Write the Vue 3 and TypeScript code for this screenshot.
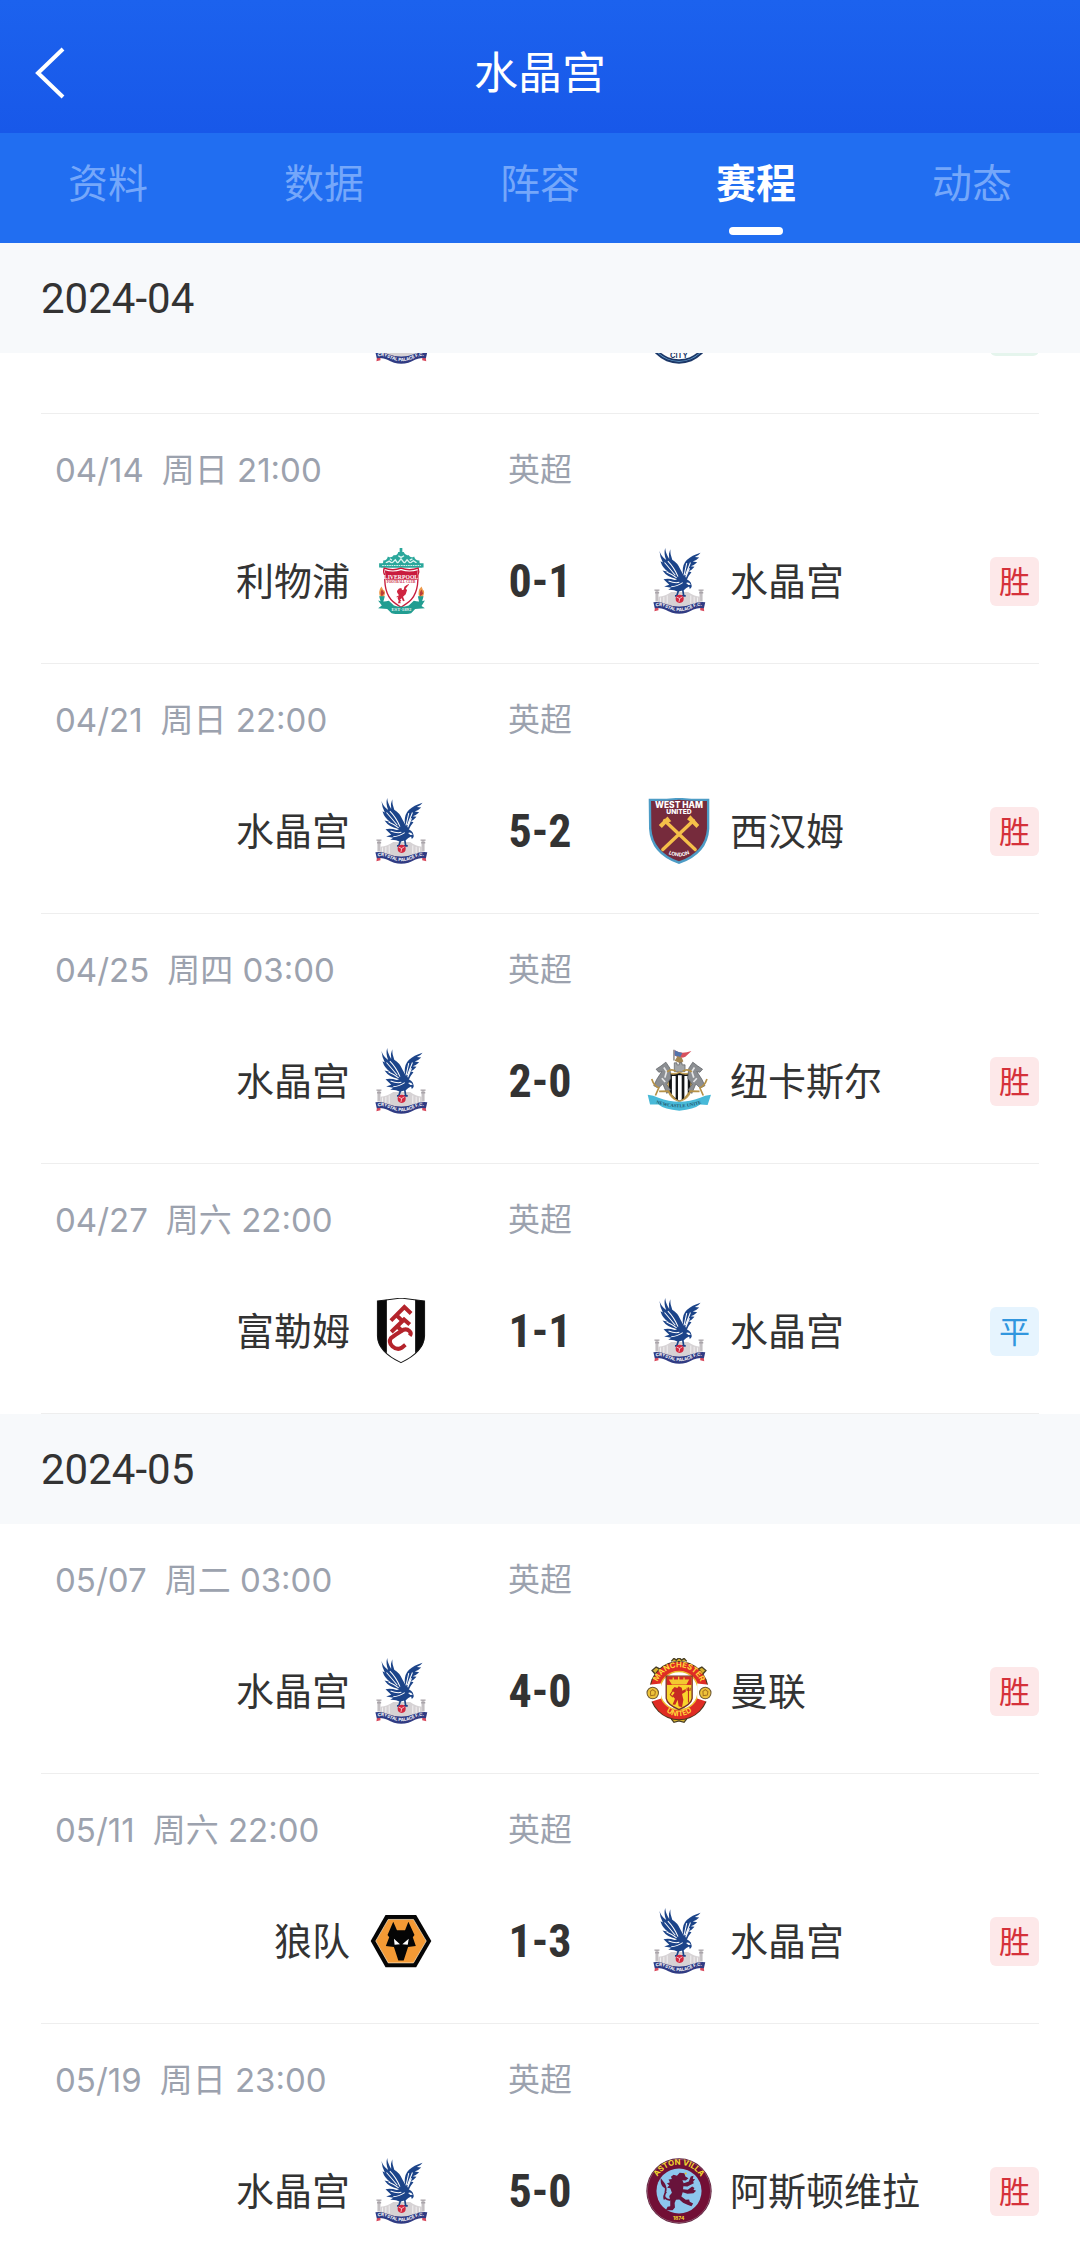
<script setup lang="ts">
interface Side {
  name: string
  crest: string
}

interface Match {
  date: string
  time: string
  home: Side
  away: Side
  score: string
  result: 'win' | 'draw'
}

interface Month {
  label: string
  matches: Match[]
}

interface Crest {
  viewBox: string
  art: string
}

const tabs = ['资料', '数据', '阵容', '赛程', '动态']
const activeTab = '赛程'

const resultText = { win: '胜', draw: '平' }

const palace: Side = { name: '水晶宫', crest: 'palace' }

const months: Month[] = [
  {
    label: '2024-04',
    matches: [
      { date: '04/14', time: '周日 21:00', home: { name: '利物浦', crest: 'liverpool' }, away: palace, score: '0-1', result: 'win' },
      { date: '04/21', time: '周日 22:00', home: palace, away: { name: '西汉姆', crest: 'westham' }, score: '5-2', result: 'win' },
      { date: '04/25', time: '周四 03:00', home: palace, away: { name: '纽卡斯尔', crest: 'newcastle' }, score: '2-0', result: 'win' },
      { date: '04/27', time: '周六 22:00', home: { name: '富勒姆', crest: 'fulham' }, away: palace, score: '1-1', result: 'draw' },
    ],
  },
  {
    label: '2024-05',
    matches: [
      { date: '05/07', time: '周二 03:00', home: palace, away: { name: '曼联', crest: 'manutd' }, score: '4-0', result: 'win' },
      { date: '05/11', time: '周六 22:00', home: { name: '狼队', crest: 'wolves' }, away: palace, score: '1-3', result: 'win' },
      { date: '05/19', time: '周日 23:00', home: palace, away: { name: '阿斯顿维拉', crest: 'villa' }, score: '5-0', result: 'win' },
    ],
  },
]

const crests: Record<string, Crest> = {
  palace: {
    viewBox: '17 41 196 196',
    art: `
      <path d="M45 166h9v34h-9zM176 166h9v34h-9z" fill="#c3bfc2" />
      <path d="M42 166h15M173 166h15M44 174h12M175 174h12" stroke="#a9a4a9" stroke-width="4" />
      <path d="M54 186Q76 184 92 172H142Q158 184 178 186V208Q116 222 52 208Z" fill="#d6d2d4" />
      <path d="M60 188v16M70 186v18M80 182v24M150 182v24M160 186v18M170 188v16" stroke="#fff" stroke-width="2" />
      <path d="M57 50Q59 71 67 84L60 80Q66 101 84 112L66 108Q80 128 105 132L128 150L140 138Q128 122 120 106Q110 84 95 76Q88 58 89 45Q83 58 86 74Q75 56 74 41Q69 57 77 77Q62 66 57 50Z" fill="#1c4489" />
      <path d="M126 110Q126 88 139 76Q153 63 179 55Q173 64 162 68L175 69Q166 78 156 81L169 83Q160 92 150 95L161 97Q153 107 144 110L152 113Q142 124 138 136L129 130Z" fill="#1c4489" />
      <path d="M69 134Q84 130 102 136L128 130Q150 136 152 150Q155 157 147 163L145 155Q136 158 130 166L112 171Q100 164 83 165L92 159L71 155L86 150L69 134Z" fill="#1c4489" />
      <path d="M72 84Q86 100 104 122M82 80Q100 98 112 126M78 112Q94 118 108 130M138 86L130 122M149 84L134 122M146 101L135 128M84 139Q102 146 116 143M92 156Q108 156 126 144" fill="none" stroke="#fff" stroke-width="3" />
      <path d="M136 145Q144 141 150 150L143 151Z" fill="#fff" />
      <path d="M114 166L108 184M126 164L129 183M103 183h11M123 183h12" stroke="#1c4489" stroke-width="5" />
      <circle cx="117" cy="192" r="12" fill="#d3273f" />
      <path d="M108 187l9 4 8-5M117 191l-2 10" stroke="#fff" stroke-width="2" fill="none" />
      <path d="M44 215l-2 14 12-3v-10zM188 215l2 14-12-3v-10z" fill="#d84a5d" />
      <path d="M39 202Q60 200 76 207Q116 223 155 207Q172 200 193 202L189 220Q172 217 158 224Q116 249 73 224Q60 217 43 220Z" fill="#303b83" />
      <path id="palace-curve" d="M46 214Q64 211 78 219Q116 238 154 219Q168 211 187 214" fill="none" />
      <text font-family="Inter, sans-serif" font-weight="700" font-size="13" fill="#fff"><textPath href="#palace-curve">CRYSTAL PALACE F.C.</textPath></text>`,
  },
  liverpool: {
    viewBox: '17 41 196 196',
    art: `
      <path d="M55 91Q64 88 62 78Q73 79 76 66Q86 73 94 62Q103 65 107 53L111 53V41H119V53L123 53Q128 65 137 62Q145 73 154 66Q157 79 170 78Q168 88 178 91V99H55Z" fill="#2aa79b" />
      <path d="M70 85l10-5 8 6 10-10 7 10 10-13 10 13 8-10 9 10 10-7 9 6M107 64l8 5 9-5M82 73l6 4M149 73l-8 4" fill="none" stroke="#dff5f1" stroke-width="4" />
      <path d="M50 86H182V99H50Z" fill="#2aa79b" />
      <path d="M59 93H174" stroke="#d0eeea" stroke-width="3" stroke-dasharray="5 2" />
      <path d="M65 101Q91 110 115 101Q140 110 166 101Q170 111 165 122Q168 184 130 207L115 217L100 207Q64 184 67 122Q61 111 65 101Z" fill="#fff" stroke="#c61c3b" stroke-width="4" />
      <path d="M67 107Q91 115 115 107Q140 115 165 107L162 135H70Z" fill="#c91b3e" />
      <text x="115" y="132" text-anchor="middle" font-family="Liberation Serif, serif" font-weight="700" font-size="17" fill="#fff">LIVERPOOL</text>
      <text x="115" y="146" text-anchor="middle" font-family="Liberation Serif, serif" font-weight="700" font-size="10" fill="#c91b3e">FOOTBALL CLUB</text>
      <path d="M103 169l6-8 7-1 2 6 5-1 2-9 7-5 2 3-5 8 4 4-4 12-8 8 5 12-5 1-4-9-5 4 2 11h-9l4-5-4-10 4-9-5-7Z" fill="#cf2540" />
      <path d="M129 157q8-4 8-9M110 183l-8 4M115 195l-7 6" stroke="#cf2540" stroke-width="3" fill="none" />
      <path d="M57 155Q46 169 53 187H63Q73 170 62 165ZM176 155Q163 166 169 187H179Q188 170 180 165Z" fill="#ee9b4c" />
      <path d="M58 164Q51 176 58 185L66 175ZM176 164Q168 174 172 184L181 177Z" fill="#bb3e38" />
      <path d="M50 184h17l-5 18h-7zM165 184h17l-5 18h-8z" fill="#219d91" />
      <path d="M47 197Q62 202 79 198L94 212Q115 219 138 212L153 198Q170 202 186 197L176 213L186 220L157 222L145 235Q116 241 87 235L74 222L47 220L58 212Z" fill="#219d91" />
      <text x="116" y="229" text-anchor="middle" font-family="Liberation Serif, serif" font-weight="700" font-size="14" fill="#e5f7f4">EST·1892</text>`,
  },
  westham: {
    viewBox: '19 41 196 196',
    art: `
      <path d="M27 43Q73 45 117 40Q161 45 207 43V132Q203 207 117 237Q32 207 28 132Z" fill="#4d9cc6" />
      <path d="M34 50Q76 51 117 46Q160 51 200 50V132Q195 201 117 229Q40 201 35 132Z" fill="#762b3c" />
      <text x="117" y="72" text-anchor="middle" font-family="Inter, sans-serif" font-weight="800" font-size="25" fill="#fff">WEST HAM</text>
      <text x="117" y="89" text-anchor="middle" font-family="Inter, sans-serif" font-weight="800" font-size="20" fill="#fff">UNITED</text>
      <path d="M74 108L165 194M160 108L69 194" stroke="#f4bf49" stroke-width="10" stroke-linecap="round" />
      <path d="M57 121L83 96L94 110L79 117L66 130ZM177 121L151 92L141 104L156 117L169 130Z" fill="#f4bf49" />
      <path id="westham-curve" d="M86 207Q116 222 151 206" fill="none" />
      <text font-family="Inter, sans-serif" font-weight="700" font-size="15" fill="#fff"><textPath href="#westham-curve">LONDON</textPath></text>`,
  },
  newcastle: {
    viewBox: '20 41 196 196',
    art: `
      <path d="M103 46V78" stroke="#555" stroke-width="3" />
      <path d="M105 48Q124 61 155 50L137 67Q122 74 105 63Z" fill="#d8515d" />
      <path d="M105 48Q118 55 128 56L121 69L105 63Z" fill="#5274ac" />
      <path d="M105 79l9-14 12 4 5 11-8 7Z" fill="#a48753" />
      <path d="M104 85h8v6h7v-6h8v6h9v20h-32Z" fill="#a2a5a7" stroke="#5b5c60" stroke-width="2" />
      <path d="M85 114Q102 122 119 113Q137 122 156 114L153 168Q146 191 119 200Q93 190 86 168Z" fill="#151618" stroke="#c3a057" stroke-width="5" />
      <path d="M97 124h11v66l-11-10zM115 122h11v72l-7 3-4-2zM134 124h10v56l-10 10z" fill="#fff" />
      <path d="M79 83L65 94L50 104L58 113L67 111L52 134L43 153L57 160L70 148L82 176L93 165L81 149L94 131L91 101Z" fill="#8b8e92" stroke="#56595e" stroke-width="2" />
      <path d="M159 83L173 94L188 104L180 113L171 111L186 134L195 153L181 160L168 148L156 176L145 165L157 149L144 131L147 101Z" fill="#8b8e92" stroke="#56595e" stroke-width="2" />
      <path d="M73 99l8 12-5 18M67 131l10 11M164 99l-8 12 6 18M171 131l-10 11" stroke="#e5e6e7" stroke-width="5" fill="none" />
      <path d="M83 112Q95 101 108 110M129 110Q143 101 156 112M37 133Q44 154 58 159L48 182M201 133Q194 154 180 159L190 182M59 170L86 169L105 192M179 170L152 169L134 192" stroke="#b59147" stroke-width="5" fill="none" />
      <path d="M25 180Q42 181 57 189Q119 212 181 189Q195 181 213 180L203 210L181 209Q162 224 119 227Q74 224 57 209L32 209Z" fill="#48b9d8" />
      <path id="newcastle-curve" d="M50 205Q119 229 187 205" fill="none" />
      <text font-family="Liberation Serif, serif" font-weight="700" font-size="14" fill="#21566d"><textPath href="#newcastle-curve">NEWCASTLE UNITED</textPath></text>`,
  },
  fulham: {
    viewBox: '21 41 196 196',
    art: `
      <path d="M48 50Q87 46 119 40Q152 46 190 50V154Q188 202 119 235Q49 202 48 154Z" fill="#fff" />
      <path d="M49 50L77 46V205Q49 185 49 154ZM161 46L189 50V154Q189 185 161 205Z" fill="#090909" />
      <path d="M49 50Q87 46 119 41Q152 46 189 50V154Q187 201 119 233Q50 201 49 154Z" fill="none" stroke="#151515" stroke-width="3" />
      <path d="M89 108L129 68L149 87M104 91L123 109M90 142L128 105L145 120M108 125L122 139M145 153Q151 145 144 139Q133 129 119 140Q101 151 89 160Q81 172 93 184Q108 197 121 189L132 180" fill="none" stroke="#b4232b" stroke-width="12" />`,
  },
  manutd: {
    viewBox: '18 41 196 196',
    art: `
      <path d="M93 51l8-9 7 5 8-7 8 7 7-5 8 9M36 78l12-10 12 6-9 21ZM196 78l-12-10-12 6 9 21ZM93 222l8 10 15-4 15 4 8-10" fill="#d7b12e" stroke="#493f26" stroke-width="4" />
      <circle cx="116" cy="138" r="88" fill="#4b351b" />
      <circle cx="116" cy="138" r="85" fill="#df2c24" />
      <circle cx="116" cy="138" r="57" fill="#fff" stroke="#edbd2f" stroke-width="4" />
      <path d="M20 121L63 117V161L24 174ZM212 121L170 117V161L208 174Z" fill="#fff" />
      <circle cx="38" cy="145" r="17" fill="#eec33a" stroke="#6b5630" stroke-width="3" />
      <circle cx="194" cy="145" r="17" fill="#eec33a" stroke="#6b5630" stroke-width="3" />
      <path d="M31 140l7-5 8 6-2 10-12 2ZM187 140l7-5 8 6-2 10-12 2Z" fill="none" stroke="#a5721e" stroke-width="3" />
      <path d="M78 95H155V161Q152 180 116 194Q81 180 78 161Z" fill="#f9d42c" stroke="#75302a" stroke-width="4" />
      <path d="M80 96H153V121H80Z" fill="#d62825" />
      <path d="M89 107h54l-6 11H96ZM99 107v-8M115 107v-10M131 107v-8" fill="#f3c931" stroke="#f3c931" stroke-width="4" />
      <path d="M103 127l8 3 4-5 9 4 2 9 10-5v8l-11 7 4 17-4 22-10-3-3-19-7 15-8-1 7-17-8-9 7-9-9-7Z" fill="#c72b22" />
      <path d="M144 128v45M140 129v8h9v-8M97 139l-7 11 8 7" stroke="#b92920" stroke-width="3" fill="none" />
      <path id="manutd-top" d="M50 120A68 68 0 0 1 182 120" fill="none" />
      <path id="manutd-bottom" d="M65 191Q116 237 168 190" fill="none" />
      <g font-family="Inter, sans-serif" font-weight="700" fill="#ffd83a">
        <text font-size="23"><textPath href="#manutd-top" startOffset="50%" text-anchor="middle">MANCHESTER</textPath></text>
        <text font-size="22"><textPath href="#manutd-bottom" startOffset="50%" text-anchor="middle">UNITED</textPath></text>
      </g>`,
  },
  wolves: {
    viewBox: '22 39 196 196',
    art: `
      <path d="M30 137L74 60H165L210 137L165 215H74Z" fill="#050505" />
      <path d="M45 137L82 73H157L195 137L157 202H82Z" fill="#f49a35" stroke="#f9e8cc" stroke-width="2" />
      <path d="M97 80L108 105H132L142 80L160 119L155 126L164 152L141 155L128 195H112L99 155L75 152L85 126L80 119Z" fill="#050505" />
      <path d="M99 130L117 147L101 148ZM143 130L124 147L140 148Z" fill="#fff" />`,
  },
  villa: {
    viewBox: '20 41 196 196',
    art: `
      <circle cx="118" cy="139" r="97" fill="#561634" />
      <circle cx="118" cy="139" r="94" fill="#720f35" stroke="#9b687d" stroke-width="2" />
      <circle cx="118" cy="139" r="67" fill="#8dc6ed" />
      <path d="M102 91l10 3 8-9 14 1 3 10 9 5-8 7-10-1 4 9 15-5 6-15 8-2-2 9 7 1-6 7 2 5-19 10-12-1-1 9 14 1 13-9 7 4-3 5 8 3-8 8-18 1-14-4-4 12 13 10 10-1 2 7 10 5-5 8-12-4-13-6-11-10-10 1-4 10 1 13-7 8H79l5-10 8-2v-16l-3-14 8-10-5-13-9-2 6-7-7-5 9-4-4-8 10-2-3-6Z" fill="#68133b" />
      <path d="M92 166Q69 163 77 145Q82 130 73 117L66 108Q66 122 76 128M80 141Q71 153 75 164" stroke="#68133b" stroke-width="5" fill="none" />
      <circle cx="138" cy="87" r="3" fill="#e8c62d" />
      <path id="villa-curve" d="M46 115A75 75 0 0 1 190 115" fill="none" />
      <g font-family="Inter, sans-serif" font-weight="700" fill="#f4d92e">
        <text font-size="23"><textPath href="#villa-curve" startOffset="50%" text-anchor="middle">ASTON VILLA</textPath></text>
        <text x="117" y="224" text-anchor="middle" font-size="15">1874</text>
      </g>`,
  },
  mancity: {
    viewBox: '18 41 196 196',
    art: `
      <circle cx="116" cy="139" r="97" fill="#1c3767" />
      <circle cx="116" cy="139" r="91" fill="#6ca9d8" />
      <circle cx="116" cy="139" r="89" fill="#1c3767" />
      <circle cx="116" cy="139" r="84" fill="#fff" />
      <text x="116" y="219" text-anchor="middle" font-family="Inter, sans-serif" font-weight="700" font-size="22" fill="#1c3767">CITY</text>`,
  },
}
</script>

<template>
  <div class="page">
    <header class="topbar">
      <button class="back" type="button" aria-label="返回">
        <svg width="32" height="56" viewBox="0 0 32 56" aria-hidden="true">
          <path d="M29 4L4 28L29 52" fill="none" stroke="#fff" stroke-width="4" />
        </svg>
      </button>
      <h1>水晶宫</h1>
    </header>

    <nav class="tabs">
      <button v-for="tab in tabs" :key="tab" type="button" class="tab" :class="{ active: tab === activeTab }">
        {{ tab }}
      </button>
    </nav>

    <main>
      <section v-for="(month, index) in months" :key="month.label">
        <h2>{{ month.label }}</h2>
        <!-- The tail of the match that has scrolled under the month heading. -->
        <div v-if="index === 0" class="scrolled">
          <div class="match">
            <div class="fixture">
              <svg class="crest home-crest" aria-hidden="true" :viewBox="crests.palace.viewBox" v-html="crests.palace.art"></svg>
              <svg class="crest away-crest" aria-hidden="true" :viewBox="crests.mancity.viewBox" v-html="crests.mancity.art"></svg>
              <div class="side away"><span class="badge loss"></span></div>
            </div>
          </div>
        </div>
        <article v-for="match in month.matches" :key="match.date" class="match">
          <div class="meta">
            <div class="when"><span>{{ match.date }}</span><span>{{ match.time }}</span></div>
            <span class="league">英超</span>
          </div>
          <div class="fixture">
            <div class="side home">{{ match.home.name }}</div>
            <svg
              class="crest home-crest"
              aria-hidden="true"
              :viewBox="crests[match.home.crest].viewBox"
              v-html="crests[match.home.crest].art"
            ></svg>
            <div class="score">{{ match.score }}</div>
            <svg
              class="crest away-crest"
              aria-hidden="true"
              :viewBox="crests[match.away.crest].viewBox"
              v-html="crests[match.away.crest].art"
            ></svg>
            <div class="side away">
              <span>{{ match.away.name }}</span>
              <span class="badge" :class="match.result">{{ resultText[match.result] }}</span>
            </div>
          </div>
        </article>
      </section>
    </main>
  </div>
</template>

<style>
body {
  margin: 0;
  background: #fff;
}
</style>

<style scoped>
.page {
  height: 100vh;
  overflow: hidden;
  background: #fff;
  color: #333;
  font-family: Inter, "Noto Sans CJK SC", sans-serif;
}

button {
  border: 0;
  padding: 0;
  background: none;
  font: inherit;
  color: inherit;
}

.topbar {
  display: grid;
  grid-template-columns: 64px 1fr 64px;
  align-items: center;
  box-sizing: border-box;
  height: 133px;
  padding: 12px 34px 0;
  background: linear-gradient(#1c62ee, #1858e9);
  color: #fff;
}

.back {
  display: flex;
}

h1 {
  margin: 0;
  font-size: 44px;
  font-weight: 400;
  line-height: 60px;
  text-align: center;
}

.tabs {
  display: flex;
  height: 110px;
  background: #216ef1;
}

.tab {
  display: flex;
  flex: 1;
  flex-direction: column;
  align-items: center;
  padding-top: 21px;
  font-size: 40px;
  line-height: 60px;
  color: #75a7fa;
}

.tab.active {
  font-weight: 700;
  color: #fff;
}

.tab.active::after {
  content: "";
  width: 54px;
  height: 8px;
  margin-top: 13px;
  border-radius: 4px;
  background: #fff;
}

h2 {
  margin: 0;
  padding: 2px 41px 0;
  background: #f7f9fb;
  font-family: Roboto, "Noto Sans CJK SC", sans-serif;
  font-size: 42px;
  font-weight: 400;
  line-height: 108px;
}

.scrolled {
  display: flex;
  flex-direction: column;
  justify-content: flex-end;
  height: 61px;
  overflow: hidden;
}

.match {
  flex-shrink: 0;
  margin: 0 41px;
  padding: 32px 0 49px;
  border-bottom: 1px solid #eee;
}

.meta {
  display: grid;
  grid-template-columns: 1fr auto 1fr;
  margin-bottom: 54px;
  padding: 0 14px;
  font-size: 33px;
  line-height: 48px;
  color: #9ca2ae;
}

.when {
  display: flex;
  gap: 18px;
}

.league {
  font-size: 32px;
}

.fixture {
  display: grid;
  grid-template-columns: 1fr 66px 212px 66px 1fr;
  align-items: center;
  height: 66px;
}

.side {
  font-size: 38px;
  line-height: 56px;
}

.home {
  grid-column: 1;
  padding-right: 18px;
  text-align: right;
}

.away {
  grid-column: 5;
  display: flex;
  align-items: center;
  justify-content: space-between;
  padding-left: 18px;
}

.crest {
  display: block;
  width: 66px;
  height: 66px;
}

.home-crest {
  grid-column: 2;
}

.away-crest {
  grid-column: 4;
}

.score {
  grid-column: 3;
  font-family: "Roboto Condensed", Roboto, sans-serif;
  font-size: 46px;
  font-weight: 700;
  line-height: 66px;
  text-align: center;
}

.badge {
  width: 49px;
  height: 49px;
  border-radius: 6px;
  font-size: 31px;
  line-height: 49px;
  text-align: center;
}

.win {
  background: #fde8e9;
  color: #d5313a;
}

.draw {
  background: #e6f4fe;
  color: #3196de;
}

.loss {
  margin-left: auto;
  background: #e5f5ed;
}
</style>
